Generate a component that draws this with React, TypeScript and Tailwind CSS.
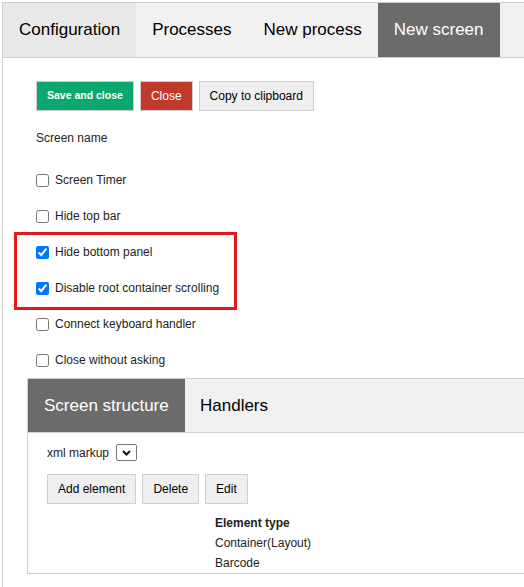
import React from "react";

const font = { fontFamily: '"Liberation Sans", Arial, sans-serif' };

function Check({ label, checked }: { label: string; checked?: boolean }) {
  return (
    <label className="flex h-[36px] items-center text-[12px] text-[#222]">
      <input
        type="checkbox"
        defaultChecked={checked}
        className="m-0 h-[13px] w-[13px] accent-[#0075ff]"
      />
      <span className="ml-[6px]">{label}</span>
    </label>
  );
}

export default function App() {
  return (
    <div className="h-[587px] w-[524px] overflow-hidden bg-white" style={font}>
      <div className="ml-[2px] mt-[2px] h-[600px] border-l border-t border-[#d0d0d0]">
        {/* top tabs */}
        <div className="flex h-[55px] border-b border-[#cfcfcf] bg-[#f0f0f0] text-[17px] text-black">
          <div className="flex items-center bg-[#e8e8e8] px-[16px]">Configuration</div>
          <div className="flex items-center px-[16px]">Processes</div>
          <div className="flex items-center px-[16px]">New process</div>
          <div className="flex items-center bg-[#6b6b6b] px-[16px] text-white">New screen</div>
        </div>

        <div className="pl-[24px]">
          <div className="pl-[9px] pt-[23px]">
            <div className="flex gap-[6px]">
              <button className="h-[30px] border border-[#cfcfcf] bg-[#0aa86e] px-[10px] text-[10.5px] font-bold text-white">
                Save and close
              </button>
              <button className="h-[30px] border border-[#cfcfcf] bg-[#c0392b] px-[10px] text-[12px] text-white">
                Close
              </button>
              <button className="h-[30px] border border-[#cfcfcf] bg-[#efefef] px-[10px] text-[12px] text-black">
                Copy to clipboard
              </button>
            </div>
            <div className="mt-[17px] h-[20px] text-[12px] leading-[20px] text-[#222]">Screen name</div>
            <div className="mt-[14px]">
              <Check label="Screen Timer" />
              <Check label="Hide top bar" />
              <div className="relative">
                <Check label="Hide bottom panel" checked />
                <Check label="Disable root container scrolling" checked />
                <div className="pointer-events-none absolute left-[-22px] top-[-2px] h-[78px] w-[223px] border-[3px] border-[#e3191e]" />
              </div>
              <Check label="Connect keyboard handler" />
              <Check label="Close without asking" />
            </div>
          </div>

          {/* bottom panel */}
          <div className="w-[540px] border-b border-l border-t border-[#cfcfcf]">
            <div className="flex h-[54px] border-b border-[#cfcfcf] bg-[#f0f0f0] text-[17px]">
              <div className="flex w-[157px] items-center bg-[#6b6b6b] px-[16px] text-white">Screen structure</div>
              <div className="flex items-center px-[15px] text-black">Handlers</div>
            </div>
            <div className="pl-[19px]">
              <div className="mt-[11px] flex h-[17px] items-center text-[12px] text-[#222]">
                <span>xml markup</span>
                <div className="ml-[7px] flex h-[17px] w-[21px] items-center justify-center rounded-[2px] border border-[#767676] bg-white">
                  <svg width="9" height="6" viewBox="0 0 9 6">
                    <path d="M1 1 L4.5 4.5 L8 1" fill="none" stroke="#111" strokeWidth="2" />
                  </svg>
                </div>
              </div>
              <div className="mt-[13px] flex gap-[6px]">
                <button className="h-[30px] border border-[#cfcfcf] bg-[#efefef] px-[10px] text-[12px] text-black">
                  Add element
                </button>
                <button className="h-[30px] border border-[#cfcfcf] bg-[#efefef] px-[10px] text-[12px] text-black">
                  Delete
                </button>
                <button className="h-[30px] border border-[#cfcfcf] bg-[#efefef] px-[10px] text-[12px] text-black">
                  Edit
                </button>
              </div>
              <div className="ml-[168px] mt-[9px] text-[12px] leading-[20px] text-[#222]">
                <div className="font-bold">Element type</div>
                <div>Container(Layout)</div>
                <div>Barcode</div>
              </div>
            </div>
          </div>
        </div>
      </div>
    </div>
  );
}
